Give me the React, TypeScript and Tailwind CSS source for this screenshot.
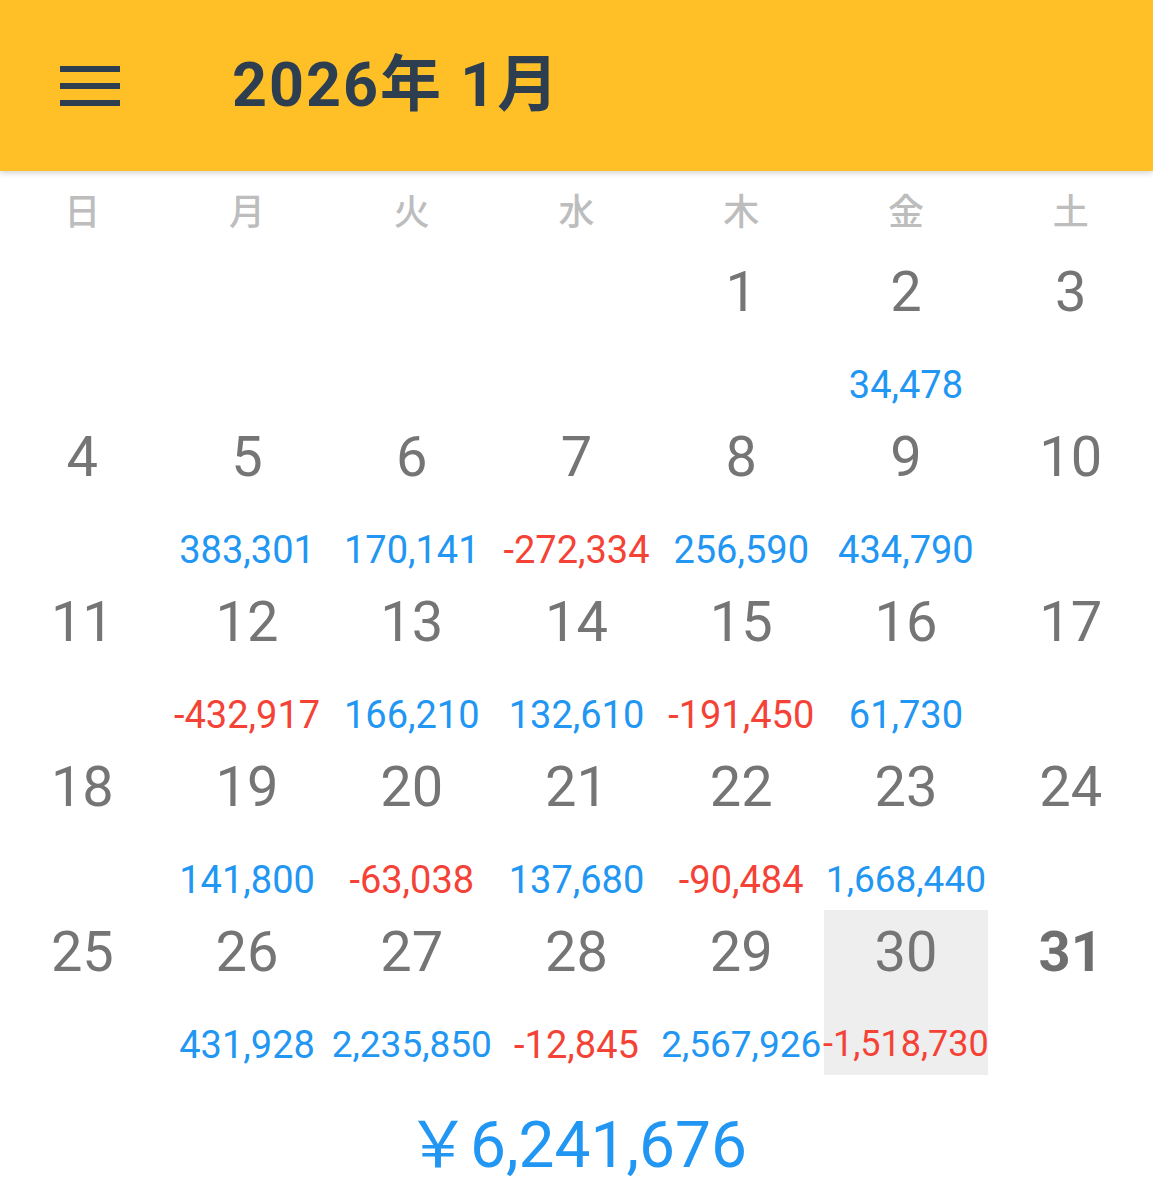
import React from 'react';

const weekdays = ['日', '月', '火', '水', '木', '金', '土'];

type Day = { day: number; amount?: number; selected?: boolean; today?: boolean } | null;

const weeks: Day[][] = [
  [null, null, null, null, { day: 1 }, { day: 2, amount: 34478 }, { day: 3 }],
  [
    { day: 4 },
    { day: 5, amount: 383301 },
    { day: 6, amount: 170141 },
    { day: 7, amount: -272334 },
    { day: 8, amount: 256590 },
    { day: 9, amount: 434790 },
    { day: 10 },
  ],
  [
    { day: 11 },
    { day: 12, amount: -432917 },
    { day: 13, amount: 166210 },
    { day: 14, amount: 132610 },
    { day: 15, amount: -191450 },
    { day: 16, amount: 61730 },
    { day: 17 },
  ],
  [
    { day: 18 },
    { day: 19, amount: 141800 },
    { day: 20, amount: -63038 },
    { day: 21, amount: 137680 },
    { day: 22, amount: -90484 },
    { day: 23, amount: 1668440 },
    { day: 24 },
  ],
  [
    { day: 25 },
    { day: 26, amount: 431928 },
    { day: 27, amount: 2235850 },
    { day: 28, amount: -12845 },
    { day: 29, amount: 2567926 },
    { day: 30, amount: -1518730, selected: true },
    { day: 31, today: true },
  ],
];

const fmt = (n: number) => n.toLocaleString('en-US');

// long figures shrink a little to fit the cell, like an autosizing text view
const amountSize = (s: string) =>
  s.length >= 10 ? 'text-[36px]' : s.length === 9 ? 'text-[37px]' : 'text-[38px]';

function DayCell({ cell }: { cell: Day }) {
  if (!cell) return <div className="h-[165px]" />;
  const label = cell.amount !== undefined ? fmt(cell.amount) : '';
  return (
    <div className={`h-[165px] flex flex-col items-center ${cell.selected ? 'bg-[#eeeeee]' : ''}`}>
      <div
        className={`pt-[14px] text-[56px] leading-none ${
          cell.today ? 'font-bold text-[#6f6f6f]' : 'text-[#757575]'
        }`}
      >
        {cell.day}
      </div>
      {cell.amount !== undefined && (
        <div className="mt-[46px] w-full flex justify-center">
          <span
            className={`whitespace-nowrap leading-none ${amountSize(label)} ${
              cell.amount < 0 ? 'text-[#f44336]' : 'text-[#2196f3]'
            }`}
          >
            {label}
          </span>
        </div>
      )}
    </div>
  );
}

export default function App() {
  return (
    <div
      className="w-[1153px] h-[1200px] bg-white overflow-hidden flex flex-col"
      style={{ fontFamily: 'Roboto, "Noto Sans CJK JP", sans-serif' }}
    >
      {/* Header */}
      <header className="relative z-10 h-[171px] bg-[#ffbf27] flex items-center shadow-[0_2px_6px_rgba(0,0,0,0.18)] shrink-0">
        <button className="ml-[60px] w-[60px] h-[42px] flex flex-col justify-between py-[1px]">
          <span className="block h-[6px] w-full bg-[#2c3e50]" />
          <span className="block h-[6px] w-full bg-[#2c3e50]" />
          <span className="block h-[6px] w-full bg-[#2c3e50]" />
        </button>
        <h1 className="ml-[112px] text-[61px] font-bold leading-none text-[#2c3e50] tracking-[2px]">
          2026年 1月
        </h1>
      </header>

      {/* Weekday labels */}
      <div className="grid grid-cols-7 h-[79px] items-center">
        {weekdays.map((w) => (
          <div
            key={w}
            className="text-center text-[36px] font-medium leading-none text-[#bdbdbd] pb-[3px]"
            style={{ fontFamily: '"Noto Sans CJK JP", sans-serif' }}
          >
            {w}
          </div>
        ))}
      </div>

      {/* Calendar grid */}
      <div className="grid grid-cols-7">
        {weeks.flat().map((cell, i) => (
          <DayCell key={i} cell={cell} />
        ))}
      </div>

      {/* Total */}
      <div className="flex justify-center pt-[39px] text-[64px] leading-none text-[#2196f3]">
        <span>￥6,241,676</span>
      </div>
    </div>
  );
}
